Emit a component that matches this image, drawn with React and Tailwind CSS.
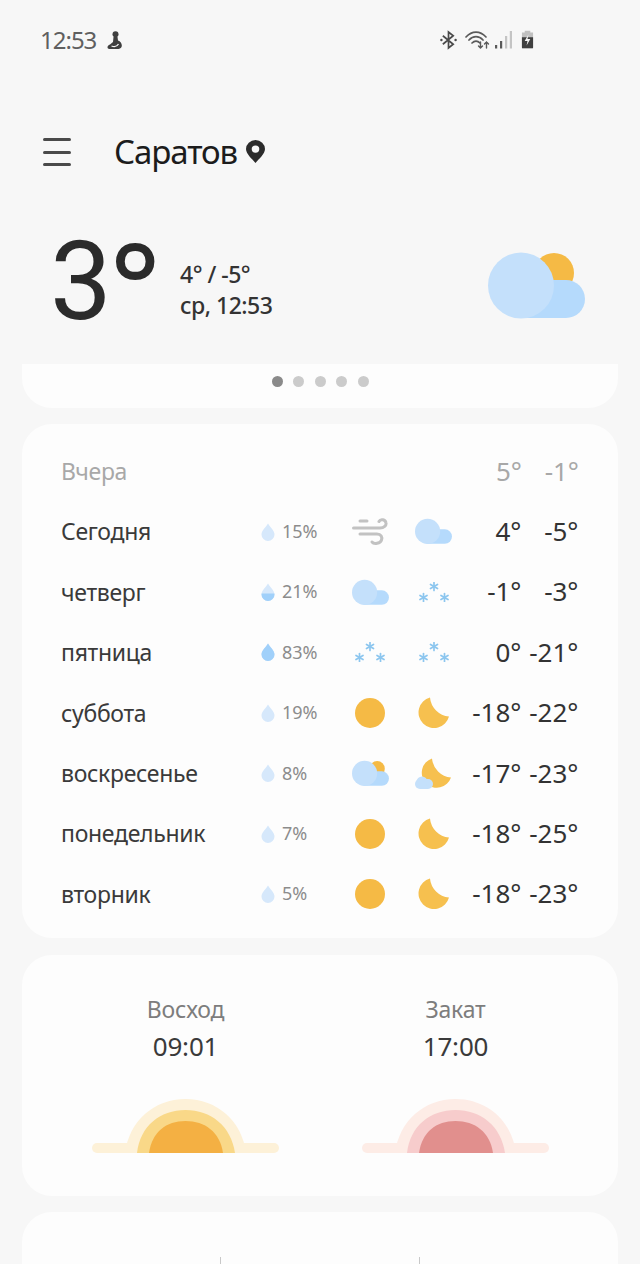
const font = { fontFamily: '"Noto Sans", Roboto, sans-serif' };

function Cloud({ w = 37, sun = false }) {
  return (
    <svg viewBox="0 0 97 65" width={w} height={(w * 65) / 97} style={{ overflow: "visible" }}>
      {sun && <circle cx="66" cy="20" r="20" fill="#f5ba45" />}
      <path d="M30 65 V27 H78 A19 19 0 0 1 78 65 Z" fill="#b5dafc" />
      <circle cx="33" cy="32.5" r="33" fill="#c4e0fb" />
    </svg>
  );
}

function Sun() {
  return <div className="w-[30px] h-[30px] rounded-full bg-[#f5ba45]" />;
}

function Moon() {
  return (
    <svg width="32" height="32" viewBox="0 0 32 32" className="ml-[2px]">
      <path d="M12 0.5 A15.5 15.5 0 1 0 31 19.5 A21 21 0 0 1 12 0.5 Z" fill="#f6c04f" />
    </svg>
  );
}

function Star({ x, y }) {
  return (
    <g transform={`translate(${x} ${y})`} stroke="#8cc6ef" strokeWidth="1.7" strokeLinecap="round">
      <line x1="0" y1="-4" x2="0" y2="4" />
      <line x1="-3.5" y1="-2" x2="3.5" y2="2" />
      <line x1="-3.5" y1="2" x2="3.5" y2="-2" />
    </g>
  );
}

function Snow({ shift = false }) {
  return (
    <svg width="30" height="20" viewBox="0 0 30 20" className={shift ? "ml-[2px]" : ""}>
      <Star x={15} y={4.5} />
      <Star x={4.5} y={15.5} />
      <Star x={25.5} y={15.5} />
    </svg>
  );
}

function Wind() {
  return (
    <svg width="36" height="28" viewBox="0 0 36 28" fill="none" stroke="#c2c2c2" strokeWidth="3" strokeLinecap="round">
      <path d="M8 3 H15" />
      <path d="M1.5 10 H28 C32 10 34.5 7.5 34 5 C33.5 1.5 28.5 0.5 27 3.5" />
      <path d="M8 16 H25 C29 16 30.5 19 29.5 22 C28.5 25.5 22 26.5 20 24" />
    </svg>
  );
}

function NightCloud() {
  return (
    <svg width="36" height="31" viewBox="0 0 36 31">
      <path d="M17 0.5 A15 15 0 1 0 36 19.5 A21 21 0 0 1 17 0.5 Z" fill="#f6c04f" />
      <rect x="0" y="21" width="18" height="10" rx="5" fill="#c4e0fb" />
      <circle cx="7" cy="24" r="5.5" fill="#c4e0fb" />
    </svg>
  );
}

function Drop({ level = 0 }) {
  return (
    <svg width="14" height="18" viewBox="0 0 14 18">
      <defs>
        <clipPath id={`d${level}`}>
          <rect x="0" y={18 - level * 18} width="14" height="18" />
        </clipPath>
      </defs>
      <path d="M7 0.5 C9 4 13.5 7.5 13.5 11.5 A6.5 6.5 0 0 1 0.5 11.5 C0.5 7.5 5 4 7 0.5 Z" fill="#d6e8fb" />
      {level > 0 && (
        <path d="M7 0.5 C9 4 13.5 7.5 13.5 11.5 A6.5 6.5 0 0 1 0.5 11.5 C0.5 7.5 5 4 7 0.5 Z" fill="#a0d0fa" clipPath={`url(#d${level})`} />
      )}
    </svg>
  );
}

const rows = [
  ["Сегодня", 0, "15%", <Wind />, <Cloud />, "4°", "-5°"],
  ["четверг", 0.42, "21%", <Cloud />, <Snow shift />, "-1°", "-3°"],
  ["пятница", 1, "83%", <Snow />, <Snow shift />, "0°", "-21°"],
  ["суббота", 0, "19%", <Sun />, <Moon />, "-18°", "-22°"],
  ["воскресенье", 0, "8%", <Cloud sun />, <NightCloud />, "-17°", "-23°"],
  ["понедельник", 0, "7%", <Sun />, <Moon />, "-18°", "-25°"],
  ["вторник", 0, "5%", <Sun />, <Moon />, "-18°", "-23°"],
];

function Row({ r }) {
  return (
    <div className="flex items-center h-[60.4px]">
      <div className="w-[193px] shrink-0 text-[23px] text-[#3a3a3a] tracking-[-0.3px]">{r[0]}</div>
      <div className="w-[22px] shrink-0 flex justify-start pl-[7px]"><Drop level={r[1]} /></div>
      <div className="w-[62.5px] shrink-0 pl-[6px] text-[18px] text-[#8c8c8c]">{r[2]}</div>
      <div className="w-[63px] shrink-0 flex justify-center">{r[3]}</div>
      <div className="w-[63px] shrink-0 flex justify-center">{r[4]}</div>
      <div className="w-[57px] shrink-0 text-right text-[26px] text-[#333]">{r[5]}</div>
      <div className="w-[57px] shrink-0 text-right text-[26px] text-[#333]">{r[6]}</div>
    </div>
  );
}

function SunGraphic({ c1, c2, c3 }) {
  return (
    <svg width="187" height="54" viewBox="0 0 187 54">
      <rect x="0" y="44" width="187" height="10" rx="5" fill={c1} />
      <path d="M33 54 C37 22 62 0 93.5 0 C125 0 150 22 154 54 Z" fill={c1} />
      <path d="M45 54 C48 27 68 11 93.5 11 C119 11 139 27 143 54 Z" fill={c2} />
      <path d="M57 54 C60 33 74 22 93.5 22 C113 22 128 33 131 54 Z" fill={c3} />
    </svg>
  );
}

function StatusIcons() {
  return (
    <div className="flex items-center text-[#4a4a4a]">
      <svg width="17" height="20" viewBox="0 0 18 20" fill="none" stroke="#4a4a4a" strokeWidth="1.8">
        <path d="M3 5.5 L14 14.5 L9 18.5 V1.5 L14 5.5 L3 14.5" />
        <circle cx="1.5" cy="10" r="1.3" fill="#4a4a4a" stroke="none" />
        <circle cx="16.5" cy="10" r="1.3" fill="#4a4a4a" stroke="none" />
      </svg>
      <svg width="25" height="20" viewBox="0 0 25 20" fill="none" stroke="#5a5a5a" strokeWidth="1.7" strokeLinecap="round" className="ml-[8px]">
        <path d="M1 7 C7 0.5 15 0.5 21 7" />
        <path d="M4 10 C8 5.5 14 5.5 18 10" />
        <path d="M7 13 C9.5 10.5 12.5 10.5 15 13" />
        <path d="M15.5 12 V18 M13.5 16 L15.5 18 L17.5 16" strokeWidth="1.4" />
        <path d="M21.5 18 V12 M19.5 14 L21.5 12 L23.5 14" strokeWidth="1.4" />
      </svg>
      <svg width="17" height="20" viewBox="0 0 17 20" className="ml-[5px]">
        <rect x="0" y="15" width="2.2" height="3.5" fill="#5a5a5a" />
        <rect x="5" y="11" width="2.2" height="7.5" fill="#5a5a5a" />
        <rect x="10" y="6" width="2.2" height="12.5" fill="#c4c4c4" />
        <rect x="14.8" y="1" width="2.2" height="17.5" fill="#c4c4c4" />
      </svg>
      <svg width="13" height="20" viewBox="0 0 14 20" className="ml-[9px]">
        <path d="M4 0 H10 V2 H13 V19 H1 V2 H4 Z" fill="#c0c0c0" />
        <path d="M1 7 H13 V18 A1 1 0 0 1 12 19 H2 A1 1 0 0 1 1 18 Z" fill="#3f3f3f" />
        <path d="M8 4 L4 11 H7 L6 16 L10 9 H7 Z" fill="#f7f7f7" />
      </svg>
    </div>
  );
}

export default function App() {
  return (
    <div className="w-[640px] h-[1264px] overflow-hidden bg-[#f7f7f7]" style={font}>
      <div className="h-[80px] pt-[25px] pl-[40px] pr-[106px] flex justify-between items-start">
        <div className="flex items-center gap-[11px] h-[30px] text-[24px] tracking-[-1px] text-[#5f5f5f]">
          <span>12:53</span>
          <svg width="16" height="18" viewBox="0 0 16 18">
            <circle cx="8.5" cy="3.3" r="3" fill="#3f3f3f" />
            <path d="M6.5 6 H10.5 L11 9.5 C15.5 11 16.5 17.5 11.5 18 H2.5 C-0.5 17.5 0 14.5 3 13.5 L6 11 Z" fill="#3f3f3f" />
            <path d="M4.5 15 C7 16 10 15.5 11.5 13" stroke="#f7f7f7" strokeWidth="1.3" fill="none" />
          </svg>
        </div>
        <div className="h-[30px] flex items-center"><StatusIcons /></div>
      </div>

      <div className="h-[145px] pl-[43px] pt-[58px] flex items-start">
        <div className="w-[28px] flex flex-col gap-[9.5px]">
          <div className="h-[3px] bg-[#4a4a4a] rounded-full" />
          <div className="h-[3px] bg-[#4a4a4a] rounded-full" />
          <div className="h-[3px] bg-[#4a4a4a] rounded-full" />
        </div>
        <div className="ml-[43px] -mt-[5px] flex items-center gap-[9px] h-[36px]">
          <span className="text-[33px] text-[#1c1c1c] tracking-[-1.1px] leading-none">Саратов</span>
          <svg width="19" height="23" viewBox="0 0 18 23" preserveAspectRatio="none">
            <path fillRule="evenodd" d="M9 0 A9 9 0 0 1 18 9 C18 14 12 19 9 23 C6 19 0 14 0 9 A9 9 0 0 1 9 0 Z M9 5.5 A3.6 3.6 0 1 0 9 12.7 A3.6 3.6 0 1 0 9 5.5 Z" fill="#2b2b2b" />
          </svg>
        </div>
      </div>

      <div className="h-[139px] pl-[50px] pr-[55px] flex items-start">
        <div className="w-[130px] h-[100px] flex items-start text-[#2b2b2b] shrink-0">
          <span className="text-[110px] leading-[110px] mt-[2px] w-[60px]" style={{ fontFamily: 'Roboto, sans-serif' }}>3</span>
          <span className="text-[118px] leading-[100px] font-medium mt-[8px] w-[50px]">°</span>
        </div>
        <div className="pt-[34px] text-[23px] leading-[31px] text-[#333] font-medium tracking-[-0.5px]">
          <div>4° / -5°</div>
          <div>ср, 12:53</div>
        </div>
        <div className="ml-auto mt-[28px]"><Cloud w={97} sun /></div>
      </div>

      <div className="mx-[22px] h-[44px] bg-[#fdfdfd] rounded-b-[30px] flex justify-center gap-[10.5px] pt-[12px]">
        <div className="w-[11px] h-[11px] rounded-full bg-[#8a8a8a]" />
        <div className="w-[11px] h-[11px] rounded-full bg-[#cbcbcb]" />
        <div className="w-[11px] h-[11px] rounded-full bg-[#cbcbcb]" />
        <div className="w-[11px] h-[11px] rounded-full bg-[#cbcbcb]" />
        <div className="w-[11px] h-[11px] rounded-full bg-[#cbcbcb]" />
      </div>

      <div className="mx-[22px] mt-[16px] h-[514px] bg-[#fdfdfd] rounded-[30px] pl-[39px] pr-[39px] pt-[17px]">
        <div className="flex items-center h-[60.4px]">
          <div className="text-[23px] text-[#a8a8a8] tracking-[-0.3px]">Вчера</div>
          <div className="w-[57px] ml-auto text-right text-[26px] text-[#a8a8a8]">5°</div>
          <div className="w-[57px] text-right text-[26px] text-[#a8a8a8]">-1°</div>
        </div>
        {rows.map((r) => <Row key={r[0]} r={r} />)}
      </div>

      <div className="mx-[22px] mt-[17px] h-[241px] bg-[#fdfdfd] rounded-[30px] pt-[38px] pl-[70px] pr-[69px] flex justify-between">
        <div className="w-[187px] flex flex-col items-center">
          <div className="text-[23px] leading-[32px] text-[#7d7d7d] tracking-[-0.2px]">Восход</div>
          <div className="text-[26px] leading-[42px] text-[#3a3a3a] tracking-[-0.2px]">09:01</div>
          <div className="mt-[32px]"><SunGraphic c1="#fdf1d8" c2="#f9d888" c3="#f4b043" /></div>
        </div>
        <div className="w-[187px] flex flex-col items-center">
          <div className="text-[23px] leading-[32px] text-[#7d7d7d] tracking-[-0.2px]">Закат</div>
          <div className="text-[26px] leading-[42px] text-[#3a3a3a] tracking-[-0.2px]">17:00</div>
          <div className="mt-[32px]"><SunGraphic c1="#fdece6" c2="#f7cccc" c3="#e18f8d" /></div>
        </div>
      </div>

      <div className="mx-[22px] mt-[16px] h-[100px] bg-[#fdfdfd] rounded-t-[30px]">
        <div className="flex pt-[45px] pl-[198px] gap-[198px]">
          <div className="w-px h-[8px] bg-[#c8c8c8]" />
          <div className="w-px h-[8px] bg-[#c8c8c8]" />
        </div>
      </div>
    </div>
  );
}
